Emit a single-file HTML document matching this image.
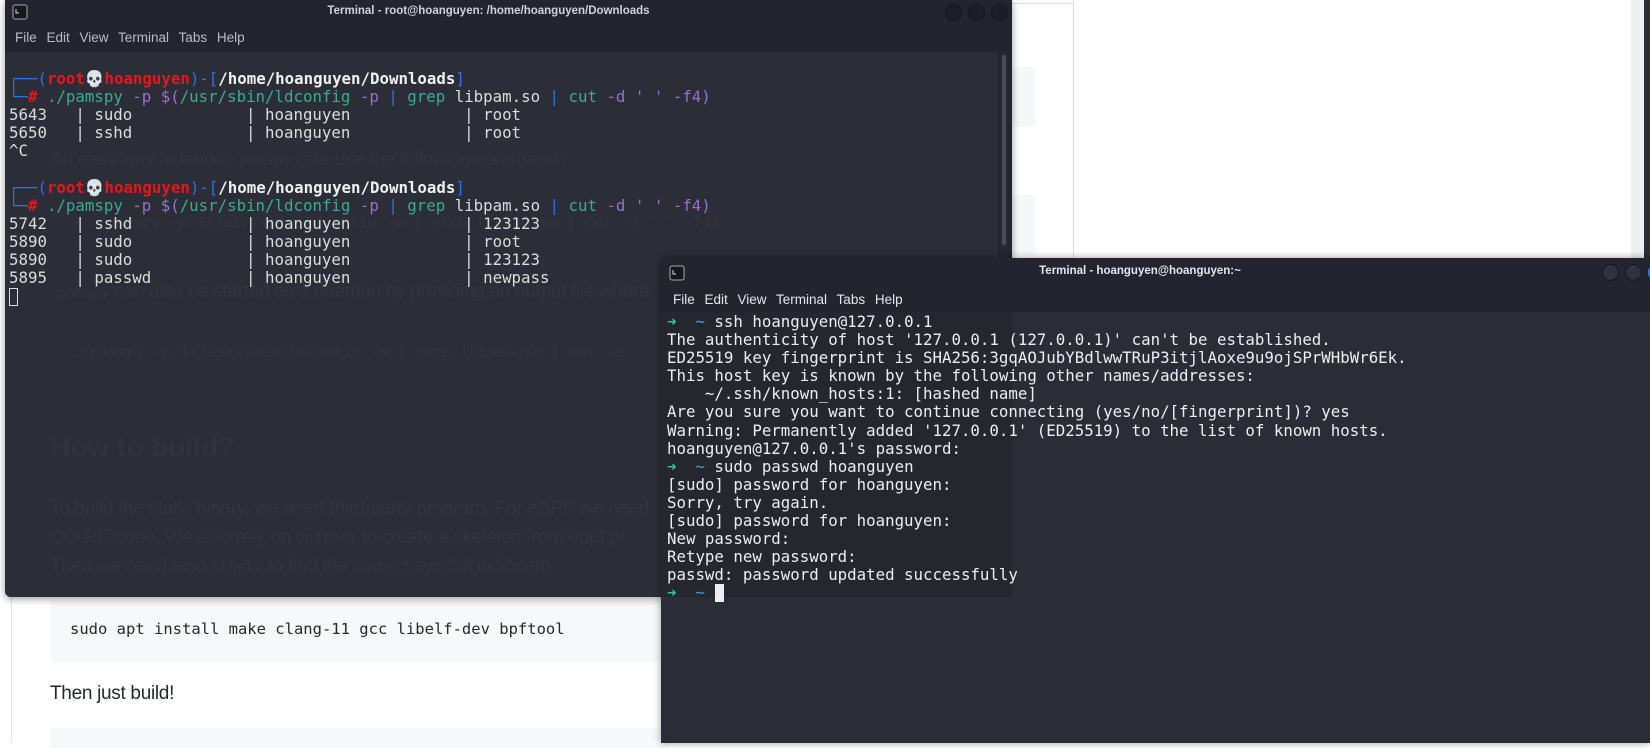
<!DOCTYPE html>
<html><head><meta charset="utf-8"><style>
*{margin:0;padding:0;box-sizing:border-box}
body{width:1650px;height:743px;overflow:hidden;background:#fff;position:relative;font-family:"Liberation Sans",sans-serif}
.abs{position:absolute}
.mono{font-family:"DejaVu Sans Mono","Liberation Mono",monospace;font-size:15.75px;white-space:pre;line-height:18.1px}
.ghost{color:#32353d;font-size:19px;letter-spacing:-0.3px;white-space:nowrap}
.gm{font-family:"DejaVu Sans Mono",monospace;color:#32353d;font-size:15px;white-space:pre}
.btn{position:absolute;width:17px;height:17px;border-radius:50%;background:#1b1e24;border:1px solid #15171c}
.b{color:#2f6fe8}.r{color:#e8161c;font-weight:bold}.w{color:#f0f0f0;font-weight:bold}
.g{color:#3dab8c}.p{color:#9a6fd0}.t{color:#dcdcdc}
.ar{color:#2ec8a0}.tl{color:#3aa6e0}
</style></head><body>
<div class="abs" style="left:11px;top:0;width:1px;height:743px;background:#e5e5e5"></div>
<div class="abs" style="left:1012px;top:3px;width:61px;height:1px;background:#ddd"></div>
<div class="abs" style="left:1073px;top:0;width:1px;height:258px;background:#dcdde0"></div>
<div class="abs" style="left:1012px;top:67px;width:24px;height:60px;background:#f6f7f9;border-radius:0 4px 4px 0"></div>
<div class="abs" style="left:1012px;top:195px;width:24px;height:60px;background:#f6f7f9;border-radius:0 4px 4px 0"></div>
<div class="abs" style="left:1631px;top:0;width:13px;height:258px;background:#efefef"></div>
<div class="abs" style="left:1644px;top:0;width:6px;height:258px;background:#2a2d35"></div>
<div class="abs" style="left:50px;top:600px;width:620px;height:62px;background:#f6f8fa;border-radius:4px"></div>
<div class="abs" style="left:70px;top:620px;font-family:'DejaVu Sans Mono',monospace;font-size:15.5px;color:#24292e;white-space:pre">sudo apt install make clang-11 gcc libelf-dev bpftool</div>
<div class="abs" style="left:50px;top:683px;font-size:19px;color:#24292e;letter-spacing:-0.3px">Then just build!</div>
<div class="abs" style="left:50px;top:728px;width:620px;height:20px;background:#f6f8fa;border-radius:4px"></div>

<div class="abs" style="left:5px;top:0;width:1007px;height:597px;background:#22252d;border-radius:0 0 6px 6px;box-shadow:0 2px 8px rgba(0,0,0,.4);overflow:hidden">
  <svg class="abs" style="left:7px;top:4px" width="16" height="16"><rect x="1" y="1" width="14" height="14" rx="2" fill="#15171c" stroke="#aaa" stroke-width="1"/><path d="M4 5v4h3" stroke="#ddd" fill="none" stroke-width="1"/></svg>
  <div class="abs" style="left:-20px;width:1007px;top:5px;text-align:center;color:#cfd2d8;font-size:11.5px;font-weight:bold">Terminal - root@hoanguyen: /home/hoanguyen/Downloads</div>
  <div class="btn" style="left:940px;top:4px"></div><div class="btn" style="left:963px;top:4px"></div><div class="btn" style="left:986px;top:4px"></div>
  <div class="abs" style="left:10px;top:30px;color:#b9bcc3;font-size:13.5px;word-spacing:6px">File Edit View Terminal Tabs Help</div>
  <div class="abs" style="left:0;top:52px;width:993px;height:545px;background:#2b2e36"></div>
  <div class="abs" style="left:995px;top:53px;width:8px;height:544px;background:#262930"></div>
  <div class="abs" style="left:997px;top:55px;width:4px;height:190px;background:#4a4e57;border-radius:2px"></div>
  <div class="abs ghost" style="left:45px;top:149px">An easy way to launch <span class="gm">pamspy</span> is to use the following command :</div>
  <div class="abs gm" style="left:65px;top:213px">&gt; ./pamspy -p $(/usr/sbin/ldconfig -p | grep libpam.so | cut -d ' ' -f4)</div>
  <div class="abs ghost" style="left:52px;top:281px"><span class="gm">pamspy</span> can also be started as a daemon by providing an output file where</div>
  <div class="abs gm" style="left:67px;top:343px">./pamspy -p $(/usr/sbin/ldconfig -p | grep libpam.so | cut -d</div>
  <div class="abs" style="left:45px;top:431px;color:#30333b;font-size:28px;font-weight:bold">How to build?</div>
  <div class="abs ghost" style="left:45px;top:498px">To build the static binary, we need third-party program. For eBPF we need</div>
  <div class="abs ghost" style="left:45px;top:527px">CO-RE code. We also rely on <span class="gm">bpftool</span> to create a skeleton from ebpf pr</div>
  <div class="abs ghost" style="left:45px;top:556px">Then we need also <span class="gm">libelf</span> to find the correct symbol in libpam.</div>
  <div class="abs mono t" style="left:4px;top:70px"><span class="b">┌──(</span><span class="r">root💀hoanguyen</span><span class="b">)-[</span><span class="w">/home/hoanguyen/Downloads</span><span class="b">]</span>
<span class="b">└─</span><span class="r">#</span> <span class="g">./pamspy</span> <span class="p">-p</span> <span class="p">$(</span><span class="g">/usr/sbin/ldconfig</span> <span class="p">-p</span> <span class="b">|</span> <span class="g">grep</span> libpam.so <span class="b">|</span> <span class="g">cut</span> <span class="p">-d</span> <span class="p">' '</span> <span class="p">-f4)</span>
5643   | sudo            | hoanguyen            | root
5650   | sshd            | hoanguyen            | root
^C

<span class="b">┌──(</span><span class="r">root💀hoanguyen</span><span class="b">)-[</span><span class="w">/home/hoanguyen/Downloads</span><span class="b">]</span>
<span class="b">└─</span><span class="r">#</span> <span class="g">./pamspy</span> <span class="p">-p</span> <span class="p">$(</span><span class="g">/usr/sbin/ldconfig</span> <span class="p">-p</span> <span class="b">|</span> <span class="g">grep</span> libpam.so <span class="b">|</span> <span class="g">cut</span> <span class="p">-d</span> <span class="p">' '</span> <span class="p">-f4)</span>
5742   | sshd            | hoanguyen            | 123123
5890   | sudo            | hoanguyen            | root
5890   | sudo            | hoanguyen            | 123123
5895   | passwd          | hoanguyen            | newpass</div>
  <div class="abs" style="left:4px;top:288px;width:9px;height:18px;border:1.5px solid #ddd"></div>
</div>

<div class="abs" style="left:661px;top:258px;width:989px;height:485px;background:#22252d;border-radius:6px 0 0 0;box-shadow:0 0 8px rgba(0,0,0,.4);overflow:hidden">
  <svg class="abs" style="left:8px;top:7px" width="16" height="16"><rect x="1" y="1" width="14" height="14" rx="2" fill="#15171c" stroke="#aaa" stroke-width="1"/><path d="M4 5v4h3" stroke="#ddd" fill="none" stroke-width="1"/></svg>
  <div class="abs" style="left:179px;width:600px;top:7px;text-align:center;color:#e4e6ea;font-size:11.5px;font-weight:bold">Terminal - hoanguyen@hoanguyen:~</div>
  <div class="btn" style="left:941px;top:6px;background:#2f333c;border-color:#15171c"></div><div class="btn" style="left:964px;top:6px;background:#2f333c;border-color:#15171c"></div><div class="btn" style="left:987px;top:6px;background:#2f7bff;border-color:#2f7bff"></div>
  <div class="abs" style="left:12px;top:34px;color:#e4e6ea;font-size:13.5px;word-spacing:6px">File Edit View Terminal Tabs Help</div>
  <div class="abs" style="left:0;top:54px;width:989px;height:431px;background:#2a2d35"></div>
  <div class="abs" style="left:0;top:54px;width:351px;height:285px;background:#24272e"></div>
  <div class="abs mono" style="left:6px;top:55px;color:#eceef0"><span class="ar">➜</span>  <span class="tl">~</span> ssh hoanguyen@127.0.0.1
The authenticity of host '127.0.0.1 (127.0.0.1)' can't be established.
ED25519 key fingerprint is SHA256:3gqAOJubYBdlwwTRuP3itjlAoxe9u9ojSPrWHbWr6Ek.
This host key is known by the following other names/addresses:
    ~/.ssh/known_hosts:1: [hashed name]
Are you sure you want to continue connecting (yes/no/[fingerprint])? yes
Warning: Permanently added '127.0.0.1' (ED25519) to the list of known hosts.
hoanguyen@127.0.0.1's password:
<span class="ar">➜</span>  <span class="tl">~</span> sudo passwd hoanguyen
[sudo] password for hoanguyen:
Sorry, try again.
[sudo] password for hoanguyen:
New password:
Retype new password:
passwd: password updated successfully
<span class="ar">➜</span>  <span class="tl">~</span> </div>
  <div class="abs" style="left:54px;top:326px;width:9px;height:18px;background:#eee"></div>
</div>
</body></html>
